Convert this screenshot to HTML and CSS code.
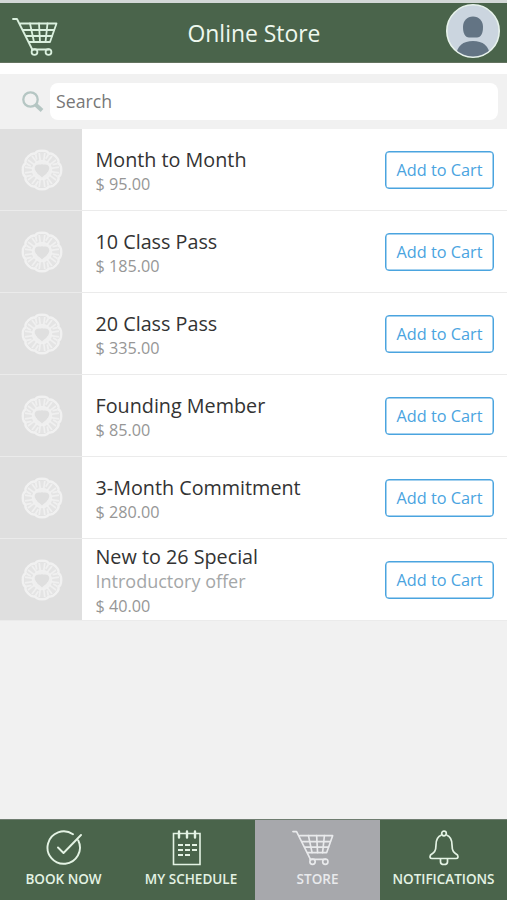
FILE: index.html
```html
<!DOCTYPE html>
<html lang="en">
<head>
<meta charset="utf-8">
<title>Online Store</title>
<link rel="stylesheet" href="styles.css">
</head>
<body>
<svg class="defs" aria-hidden="true">
  <symbol id="cart" viewBox="0 0 46 38">
    <g fill="none" stroke="currentColor" stroke-width="1.800" stroke-linecap="round" stroke-linejoin="round">
      <path d="M1 1H5L20.500 32M8.500 5.500H44.500L38 24H17"/>
      <path d="M11 12H42M14 18H40M18 5.500L22 24M27 5.500L28 24M35.500 5.500L33.500 24M20 31.500H37"/>
      <circle cx="22.500" cy="34" r="2.900"/><circle cx="36.500" cy="34" r="2.900"/>
    </g>
  </symbol>
  <symbol id="emblem" viewBox="-21 -21 42 42">
    <g fill="none" stroke="currentColor">
      <g id="petal">
        <path d="M-6.800 -15.800C-6 -20.300 6 -20.300 6.800 -15.800" stroke-width="2.500"/>
        <path d="M-1.700 -9L-2.800 -17M1.700 -9L2.800 -17M-5.300 -10.500L-6.300 -15.500" stroke-width="1.700" opacity=".9"/>
      </g>
      <use href="#petal" transform="rotate(45)"/><use href="#petal" transform="rotate(90)"/><use href="#petal" transform="rotate(135)"/><use href="#petal" transform="rotate(180)"/><use href="#petal" transform="rotate(225)"/><use href="#petal" transform="rotate(270)"/><use href="#petal" transform="rotate(315)"/>
      <circle r="13" stroke-width="9" opacity=".3"/>
      <circle r="8" stroke-width="4.500" opacity=".9"/>
      <path d="M0 7.500L-6 1.500C-10 -4 -3.500 -8 0 -3.700C3.500 -8 10 -4 6 1.500Z" fill="#dfdfdf" stroke="none"/>
    </g>
  </symbol>
</svg>
<div class="app">
  <header class="header">
    <svg class="header-cart"><use href="#cart"/></svg>
    <h1 class="title">Online Store</h1>
    <svg class="avatar" viewBox="0 0 54 54">
      <defs><clipPath id="face"><circle cx="27" cy="27" r="25.500"/></clipPath></defs>
      <circle cx="27" cy="27" r="26.200" fill="#cbd5df" stroke="#e8f3ec" stroke-width="1.600"/>
      <g fill="#637484" clip-path="url(#face)">
        <path d="M27 12.500C33 12.500 37 17 37 23C37 29 35 33.500 31 33.500H23C19 33.500 17 29 17 23C17 17 21 12.500 27 12.500Z"/>
        <path d="M10 54C10 42 17 37 27 37S44 42 44 54Z"/>
      </g>
    </svg>
  </header>
  <div class="search">
    <svg class="search-icon" viewBox="0 0 22 22"><g fill="none" stroke="#b5c6c3"><circle cx="8.500" cy="8.500" r="7.200" stroke-width="2.300"/><path d="M13.500 13.500L20 19.500" stroke-width="4"/></g></svg>
    <div class="field">Search</div>
  </div>
  <main class="list">
    <article class="item"><div class="thumb"><svg><use href="#emblem"/></svg></div><div class="info"><h2 class="name">Month to Month</h2><p class="price">$ 95.00</p></div><button class="add">Add to Cart</button></article>
    <article class="item"><div class="thumb"><svg><use href="#emblem"/></svg></div><div class="info"><h2 class="name">10 Class Pass</h2><p class="price">$ 185.00</p></div><button class="add">Add to Cart</button></article>
    <article class="item"><div class="thumb"><svg><use href="#emblem"/></svg></div><div class="info"><h2 class="name">20 Class Pass</h2><p class="price">$ 335.00</p></div><button class="add">Add to Cart</button></article>
    <article class="item"><div class="thumb"><svg><use href="#emblem"/></svg></div><div class="info"><h2 class="name">Founding Member</h2><p class="price">$ 85.00</p></div><button class="add">Add to Cart</button></article>
    <article class="item"><div class="thumb"><svg><use href="#emblem"/></svg></div><div class="info"><h2 class="name">3-Month Commitment</h2><p class="price">$ 280.00</p></div><button class="add">Add to Cart</button></article>
    <article class="item"><div class="thumb"><svg><use href="#emblem"/></svg></div><div class="info"><h2 class="name">New to 26 Special</h2><p class="note">Introductory offer</p><p class="price">$ 40.00</p></div><button class="add">Add to Cart</button></article>
  </main>
  <nav class="tabs">
    <a class="tab">
      <svg class="tab-icon" viewBox="0 0 40 36"><g fill="none" stroke="currentColor" stroke-width="1.900" stroke-linecap="round" stroke-linejoin="round"><path d="M29 4.300A16.200 16.200 0 1 0 34.300 10.500M14 17.500L19.500 23L37 5"/></g></svg>
      <span>BOOK NOW</span>
    </a>
    <a class="tab">
      <svg class="tab-icon tab-calendar" viewBox="0 0 40 36"><g fill="none" stroke="currentColor" stroke-width="1.600"><path d="M6.500 3.500H33V34.500H6.500Z"/><path d="M12 1.500V7.500M20 1.500V7.500M28 1.500V7.500" stroke-width="2.400" stroke-linecap="round"/><path d="M11 15H30M11 20H30M11 25H23" stroke-width="1.900" stroke-dasharray="5 2"/></g></svg>
      <span>MY SCHEDULE</span>
    </a>
    <a class="tab active">
      <svg class="tab-icon tab-cart"><use href="#cart"/></svg>
      <span>STORE</span>
    </a>
    <a class="tab">
      <svg class="tab-icon" viewBox="0 0 40 36"><g fill="none" stroke="currentColor" stroke-width="1.700" stroke-linejoin="round"><circle cx="20" cy="3.500" r="2.300"/><path d="M17.500 5C13.500 6.500 12 10 12 15C12 22 9.500 23 6.500 25Q5 28.500 8 28.500H32Q35 28.500 33.500 25C30.500 23 28 22 28 15C28 10 26.500 6.500 22.500 5M16.500 29V32Q16.500 34.500 20 34.500T23.500 32V29"/></g></svg>
      <span>NOTIFICATIONS</span>
    </a>
  </nav>
</div>
</body>
</html>
```
FILE: styles.css
```css
* { box-sizing: border-box; margin: 0; padding: 0; }
body { background: #f1f1f1; font-family: "Open Sans", "Noto Sans", sans-serif; }
svg { display: block; flex: none; }
.defs { position: absolute; width: 0; height: 0; }
.app { display: flex; flex-direction: column; height: 900px; overflow: hidden; }
.header { display: grid; grid-template-columns: 62px 1fr 61px; align-items: center; height: 63px; background: #4a644b; border-top: 3px solid #d3d8d7; border-bottom: 1px solid #63735f; }
.header-cart { width: 46px; height: 38px; margin: 9px 0 0 12px; color: #daf0de; }
.title { text-align: center; font-size: 22.900px; font-weight: 400; line-height: 30px; color: #eef8ee; padding-top: 2px; }
.avatar { width: 54px; height: 54px; margin-top: -3px; }
.search { display: flex; align-items: center; height: 66px; border-top: 11px solid #fff; padding: 0 9px 0 22px; background: #f1f1f1; }
.search-icon { width: 22px; height: 22px; margin-right: 6px; }
.field { flex: 1; height: 37px; border-radius: 8px; background: #fff; color: #777; font-size: 17.700px; line-height: 36px; padding-left: 6px; }
.item { display: flex; align-items: center; height: 82px; background: #fff; border-bottom: 1px solid #ebebeb; padding-right: 13px; }
.thumb { display: flex; align-items: center; justify-content: center; align-self: stretch; width: 82px; background: #dfdfdf; color: #f1f1f1; }
.thumb svg { width: 42px; height: 42px; margin-left: 1px; }
.info { flex: 1; padding: 3px 0 0 13.500px; }
.name { font-size: 19.750px; font-weight: 400; line-height: 25px; color: #333; }
.price { font-size: 16.200px; line-height: 24px; color: #969696; }
.note { font-size: 18px; line-height: 25px; color: #a4a7a8; }
.add { width: 109px; height: 38px; border: 1px solid #4aa4df; box-shadow: inset 0 0 0 .5px #4aa4df; border-radius: 4px; background: #fff; color: #4aa4df; font: 16.300px/24px "Open Sans", "Noto Sans", sans-serif; }
.tabs { display: grid; grid-template-columns: 127px 128px 125px 127px; height: 81px; margin-top: auto; border-top: 1px solid #6f7d70; background: #4a644b; }
.tab { display: flex; flex-direction: column; align-items: center; padding-top: 10px; color: #e4f3e4; font-size: 13.500px; font-weight: 600; line-height: 18px; white-space: nowrap; }
.tab span { margin-top: 4px; }
.tab-icon { width: 40px; height: 36px; }
.tab-calendar { margin-left: -8px; }
.tab-cart { width: 42px; margin-left: -9px; }
.active { background: #a7a8ac; color: #e9eaec; }
```
